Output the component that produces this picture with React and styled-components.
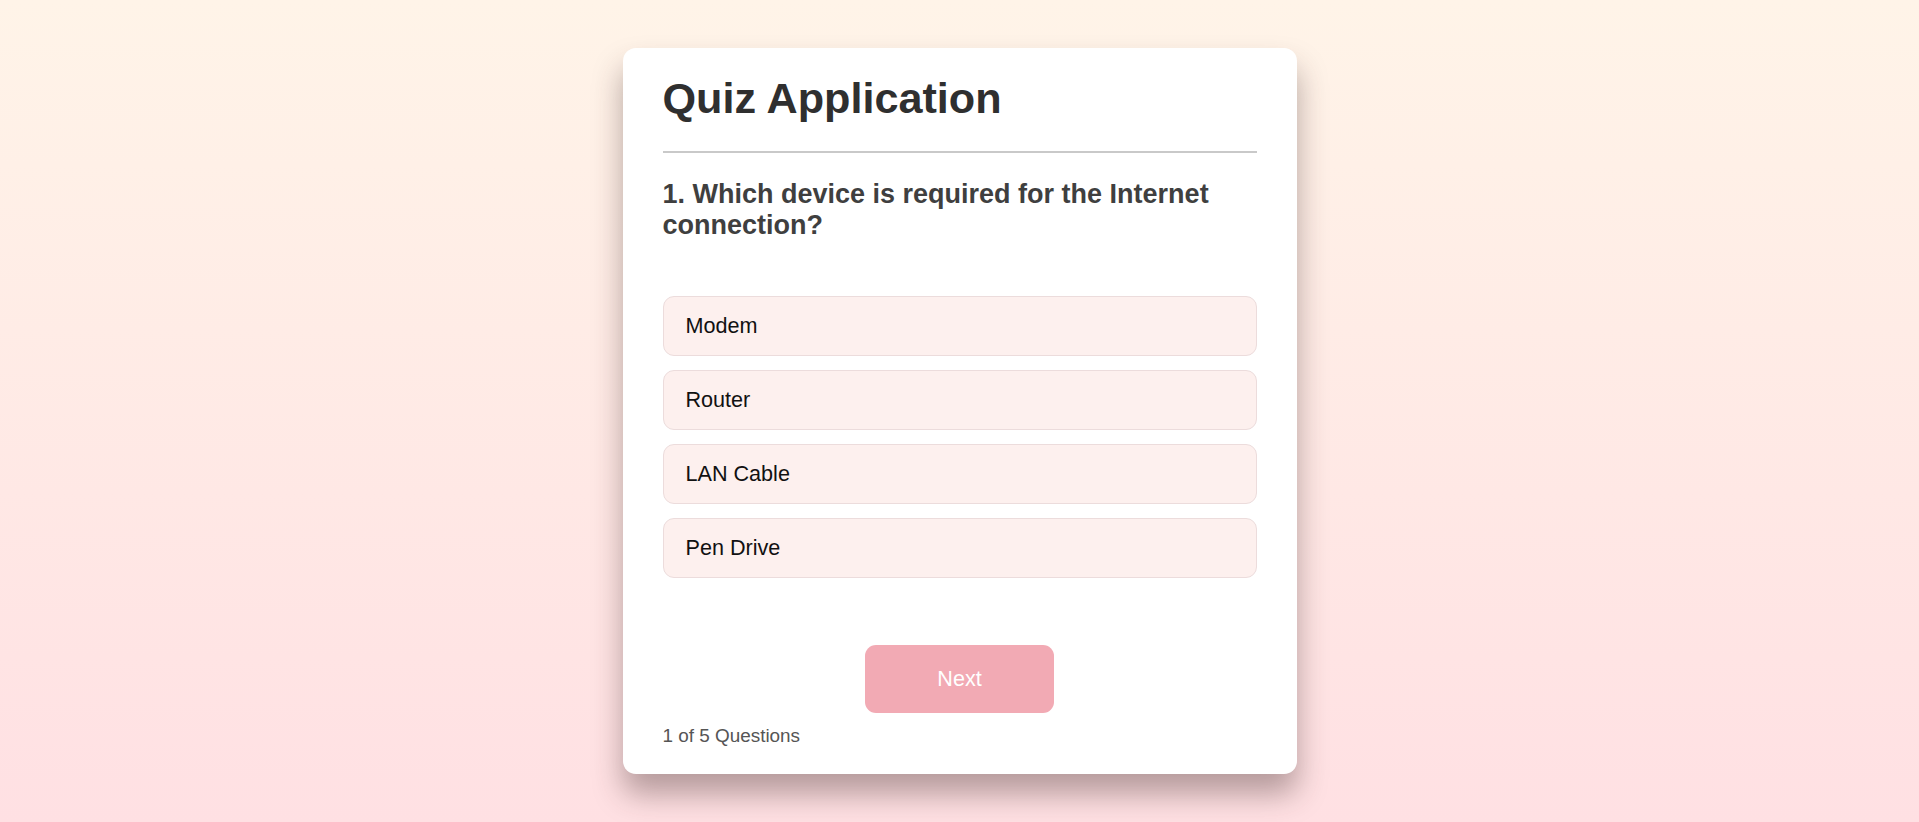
import React from "react";
import styled, { createGlobalStyle } from "styled-components";

const GlobalStyle = createGlobalStyle`
  * { box-sizing: border-box; }
  html, body { margin: 0; padding: 0; }
  body {
    font-family: "Liberation Sans", Arial, sans-serif;
    background: linear-gradient(180deg, #fff4e8 0%, #ffe0e3 100%);
    min-height: 100vh;
  }
`;

const Page = styled.main`
  min-height: 100vh;
  display: flex;
  align-items: center;
  justify-content: center;
`;

const Card = styled.section`
  width: 674px;
  background: #ffffff;
  border-radius: 13px;
  padding: 26px 40px 27px;
  display: flex;
  flex-direction: column;
  box-shadow: 0 20px 30px rgba(60, 40, 40, 0.38);
`;

const Title = styled.h1`
  margin: 0;
  font-size: 43.2px;
  font-weight: 700;
  line-height: normal;
  color: #2f2f2f;
`;

const Divider = styled.div`
  height: 2px;
  background: #c9c9c9;
  margin: 28px 0 26px;
`;

const Question = styled.h2`
  margin: 0;
  font-size: 27px;
  font-weight: 700;
  line-height: normal;
  color: #3f3f3f;
`;

const Options = styled.ul`
  list-style: none;
  margin: 55px 0 0;
  padding: 0;
  display: flex;
  flex-direction: column;
  gap: 14px;
`;

const Option = styled.li`
  height: 60px;
  display: flex;
  align-items: center;
  padding: 0 22px;
  background: #fdf0ee;
  border: 1px solid #ecdcdc;
  border-radius: 11px;
  font-size: 21.6px;
  color: #111;
  cursor: pointer;
`;

const NextButton = styled.button`
  align-self: center;
  margin-top: 67px;
  width: 189px;
  height: 68px;
  border: none;
  border-radius: 11px;
  background: #f2aab4;
  color: #ffffff;
  font-family: "Liberation Sans", Arial, sans-serif;
  font-size: 21.6px;
  cursor: pointer;
`;

const Progress = styled.p`
  margin: 12px 0 0;
  font-size: 18.9px;
  line-height: normal;
  color: #555;
`;

const options = ["Modem", "Router", "LAN Cable", "Pen Drive"];

export default function App() {
  return (
    <>
      <GlobalStyle />
      <Page>
        <Card>
          <Title>Quiz Application</Title>
          <Divider />
          <Question>1. Which device is required for the Internet connection?</Question>
          <Options>
            {options.map((o) => (
              <Option key={o}>{o}</Option>
            ))}
          </Options>
          <NextButton>Next</NextButton>
          <Progress>1 of 5 Questions</Progress>
        </Card>
      </Page>
    </>
  );
}
